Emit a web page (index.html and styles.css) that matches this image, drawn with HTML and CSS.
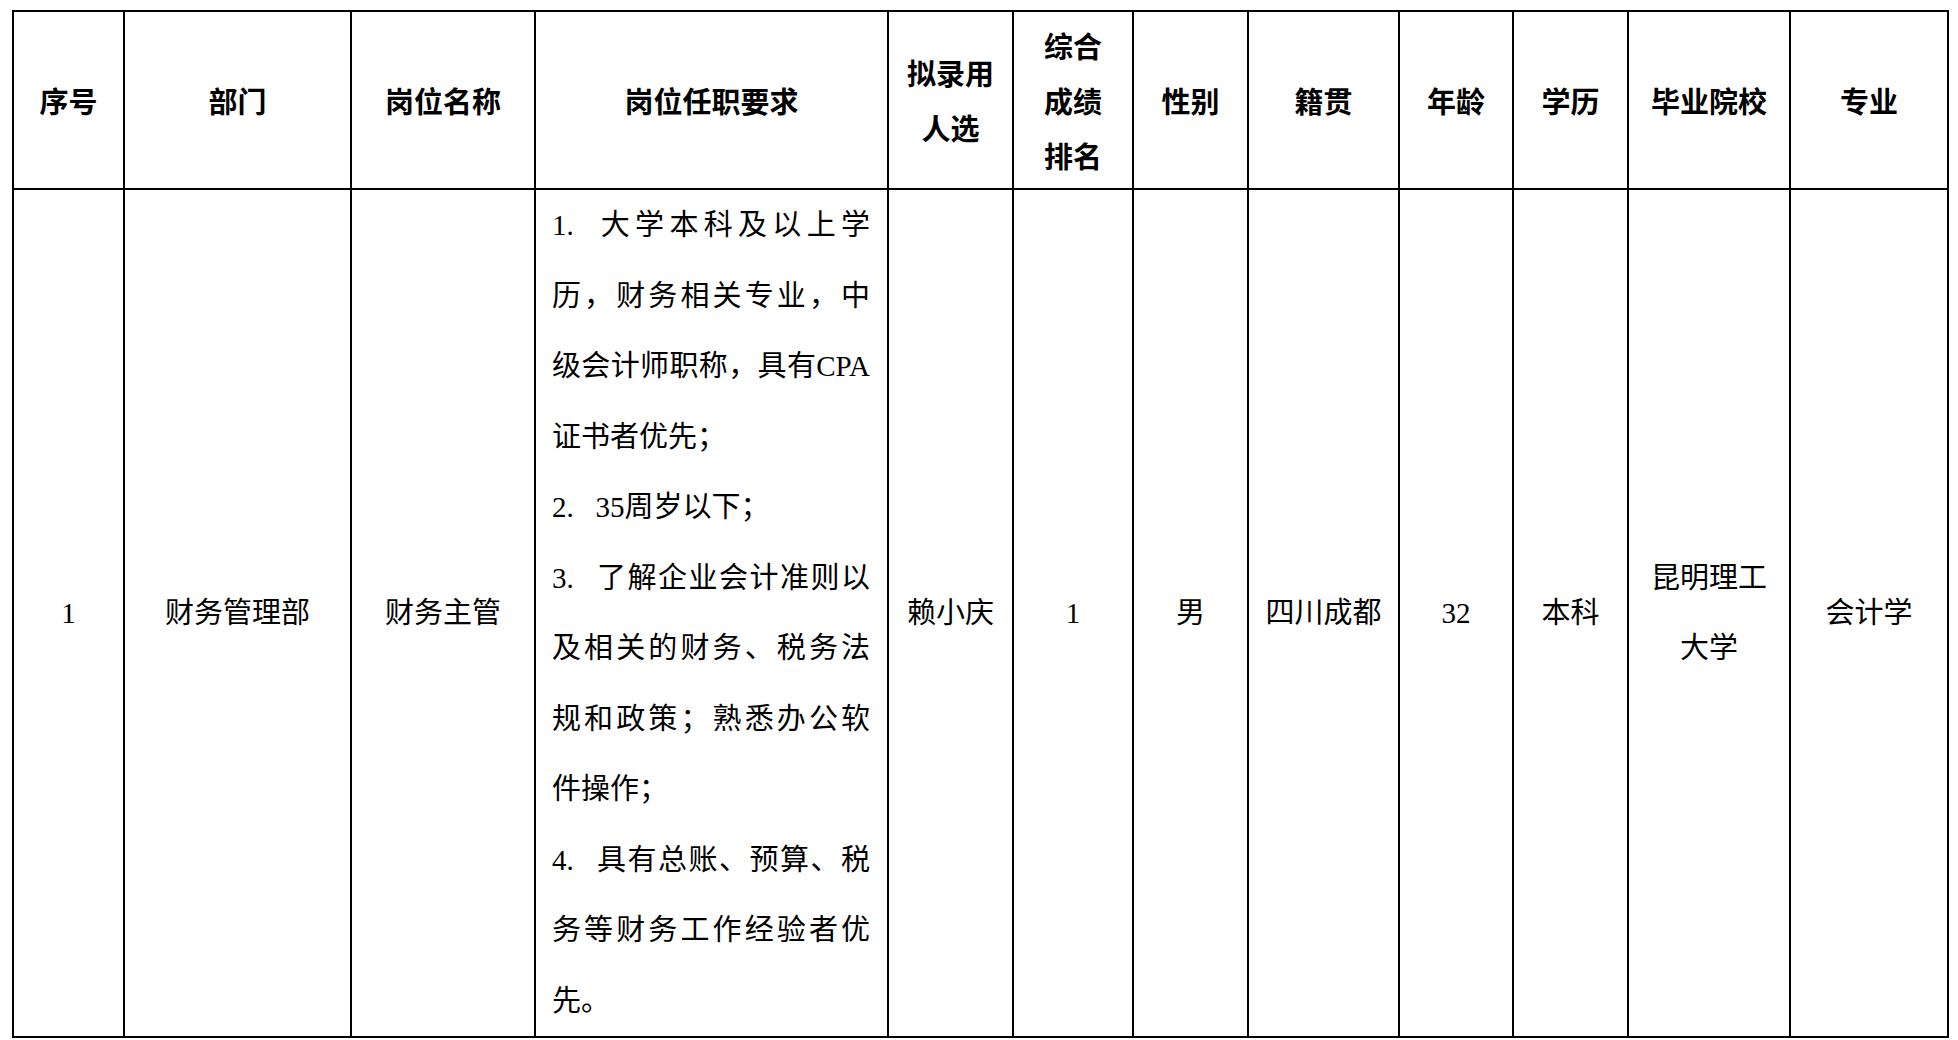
FILE: index.html
```html
<!DOCTYPE html>
<html lang="zh-CN">
<head>
<meta charset="utf-8">
<title>拟录用人选公示</title>
<link rel="stylesheet" href="styles.css">
</head>
<body>
<div class="sheet">
<table class="grid">
<colgroup>
<col class="c1"><col class="c2"><col class="c3"><col class="c4"><col class="c5"><col class="c6">
<col class="c7"><col class="c8"><col class="c9"><col class="c10"><col class="c11"><col class="c12">
</colgroup>
<thead>
<tr class="head">
<th>序号</th>
<th>部门</th>
<th>岗位名称</th>
<th>岗位任职要求</th>
<th>拟录用<br>人选</th>
<th>综合<br>成绩<br>排名</th>
<th>性别</th>
<th>籍贯</th>
<th>年龄</th>
<th>学历</th>
<th>毕业院校</th>
<th>专业</th>
</tr>
</thead>
<tbody>
<tr class="row">
<td>1</td>
<td>财务管理部</td>
<td>财务主管</td>
<td class="req">
<div class="ln j"><span class="num">1.</span>大学本科及以上学</div>
<div class="ln j">历，财务相关专业，中</div>
<div class="ln j">级会计师职称，具有CPA</div>
<div class="ln">证书者优先；</div>
<div class="ln"><span class="num">2.</span>35周岁以下；</div>
<div class="ln j"><span class="num">3.</span>了解企业会计准则以</div>
<div class="ln j">及相关的财务、税务法</div>
<div class="ln j">规和政策；熟悉办公软</div>
<div class="ln">件操作；</div>
<div class="ln j"><span class="num">4.</span>具有总账、预算、税</div>
<div class="ln j">务等财务工作经验者优</div>
<div class="ln">先。</div>
</td>
<td>赖小庆</td>
<td>1</td>
<td>男</td>
<td>四川成都</td>
<td>32</td>
<td>本科</td>
<td>昆明理工<br>大学</td>
<td>会计学</td>
</tr>
</tbody>
</table>
</div>
</body>
</html>
```
FILE: styles.css
```css
html, body {
  margin: 0;
  padding: 0;
  background: #ffffff;
}

.sheet {
  padding: 10px 0 0 12px;
}

.grid {
  border-collapse: collapse;
  table-layout: fixed;
  width: 1937px;
  font-family: "Liberation Serif", "Noto Sans CJK SC", serif;
  font-size: 29px;
  color: #000000;
}

.c1 { width: 111px; }
.c2 { width: 227px; }
.c3 { width: 184px; }
.c4 { width: 353px; }
.c5 { width: 125px; }
.c6 { width: 120px; }
.c7 { width: 115px; }
.c8 { width: 151px; }
.c9 { width: 114px; }
.c10 { width: 115px; }
.c11 { width: 162px; }
.c12 { width: 158px; }

.grid th,
.grid td {
  border: 2px solid #000000;
  padding: 0;
  text-align: center;
  vertical-align: middle;
}

.head th {
  height: 176px;
  font-family: "Noto Sans CJK SC", sans-serif;
  font-weight: 700;
  line-height: 55px;
}

.row td {
  height: 844px;
  line-height: 70.5px;
  font-weight: 400;
}

.row td.req {
  text-align: left;
  vertical-align: top;
  padding: 0 17px 0 16px;
}

.ln {
  white-space: nowrap;
  height: 70.5px;
}

.ln.j {
  text-align: justify;
  text-align-last: justify;
}

.num {
  display: inline-block;
  width: 1.5em;
}
```
